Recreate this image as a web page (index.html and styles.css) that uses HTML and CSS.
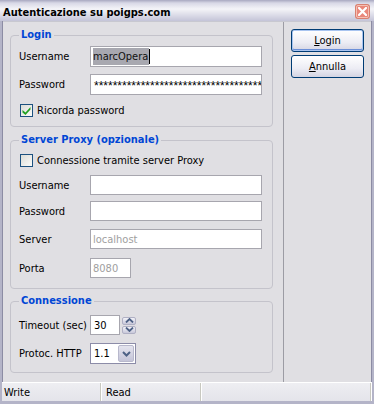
FILE: index.html
```html
<!DOCTYPE html>
<html>
<head>
<meta charset="utf-8">
<link rel="stylesheet" href="styles.css">
</head>
<body>
<div class="window">
  <div class="titlebar">
    <span class="title">Autenticazione su poigps.com</span>
    <span class="close"><svg width="9" height="9" viewBox="0 0 9 9"><path d="M1 1 L8 8 M8 1 L1 8" stroke="#fff" stroke-width="2.2" stroke-linecap="square"/></svg></span>
  </div>
  <div class="client">
    <div class="main">
      <fieldset class="group g-login">
        <legend>Login</legend>
        <div class="row">
          <span class="label">Username</span>
          <div class="input wide"><span class="sel">marcOpera</span><span class="caret"></span></div>
        </div>
        <div class="row">
          <span class="label">Password</span>
          <div class="input wide pw">************************************</div>
        </div>
        <div class="row check-row">
          <span class="checkbox on"><svg width="11" height="11" viewBox="0 0 11 11"><path d="M1.5 5 L4.5 7.5 L9.5 2 L9.5 4.5 L4.5 10 L1.5 7.5 Z" fill="#21a121"/></svg></span>
          <span class="check-label">Ricorda password</span>
        </div>
      </fieldset>

      <fieldset class="group g-proxy">
        <legend>Server Proxy (opzionale)</legend>
        <div class="row check-row">
          <span class="checkbox"></span>
          <span class="check-label">Connessione tramite server Proxy</span>
        </div>
        <div class="row r20">
          <span class="label">Username</span>
          <div class="input wide"></div>
        </div>
        <div class="row r20">
          <span class="label">Password</span>
          <div class="input wide"></div>
        </div>
        <div class="row r20 server">
          <span class="label">Server</span>
          <div class="input wide disabled">localhost</div>
        </div>
        <div class="row r20 porta">
          <span class="label">Porta</span>
          <div class="input short disabled">8080</div>
        </div>
      </fieldset>

      <fieldset class="group g-conn">
        <legend>Connessione</legend>
        <div class="row r20">
          <span class="label">Timeout (sec)</span>
          <div class="input num">30</div>
          <div class="spinner">
            <span class="spin-btn"><svg width="9" height="5" viewBox="0 0 9 5"><path d="M1 4.5 L4.5 1 L8 4.5" fill="none" stroke="#4d6185" stroke-width="1.8"/></svg></span>
            <span class="spin-btn"><svg width="9" height="5" viewBox="0 0 9 5"><path d="M1 0.5 L4.5 4 L8 0.5" fill="none" stroke="#4d6185" stroke-width="1.8"/></svg></span>
          </div>
        </div>
        <div class="row r21">
          <span class="label">Protoc. HTTP</span>
          <div class="combo">
            <span class="combo-val">1.1</span>
            <span class="combo-btn"><svg width="9" height="6" viewBox="0 0 9 6"><path d="M1 1 L4.5 4.5 L8 1" fill="none" stroke="#4d6185" stroke-width="2"/></svg></span>
          </div>
        </div>
      </fieldset>
    </div>
    <div class="side">
      <button class="btn default"><u>L</u>ogin</button>
      <button class="btn"><u>A</u>nnulla</button>
    </div>
  </div>
  <div class="status">
    <span class="panel p1">Write</span>
    <span class="panel p2">Read</span>
    <span class="panel p3"></span>
  </div>
</div>
</body>
</html>
```

FILE: styles.css
```css
html, body {
  margin: 0;
  padding: 0;
  background: #ffffff;
}

body {
  font-family: "DejaVu Sans Condensed", "Liberation Sans", sans-serif;
  font-size: 11px;
  color: #000;
}

.window {
  width: 374px;
  height: 404px;
  box-sizing: border-box;
  display: flex;
  flex-direction: column;
  background: #e0dfe3;
  border-left: 2px solid #b4b4c8;
  border-right: 2px solid #b4b4c8;
  border-bottom: 3px solid #b4b4c8;
  box-shadow: inset 1px 0 0 #8c8ca4, inset -1px 0 0 #8c8ca4, inset 0 -1px 0 #8c8ca4;
}

.titlebar {
  height: 21px;
  flex: none;
  margin: 0 -2px;
  display: flex;
  align-items: center;
  justify-content: space-between;
  padding: 3px 5px 0 3px;
  box-sizing: border-box;
  background: linear-gradient(#a8a8c0 0, #d8d8e6 3px, #f4f4f8 9px, #dcdce8 15px, #c4c4d8 21px);
}

.title {
  font-family: "DejaVu Sans Condensed", "Liberation Sans", sans-serif;
  font-weight: bold;
  font-size: 11px;
  color: #000;
}

.close {
  width: 13px;
  height: 13px;
  box-sizing: border-box;
  border: 1px solid #f4c0b4;
  border-radius: 2px;
  background: #e9877a;
  display: flex;
  align-items: center;
  justify-content: center;
  box-shadow: 0 0 0 1px #d88070;
  margin-top: -1px;
}

.client {
  flex: 1;
  display: flex;
  border-top: 1px solid #c8c8d0;
  margin-left: 1px;
  margin-right: 1px;
}

.main {
  width: 280px;
  flex: none;
  border-right: 1px solid #9c9ca4;
  display: flex;
  flex-direction: column;
  padding-top: 6px;
}

.group {
  margin: 0 10px 0 7px;
  border: 1px solid #c4c3cb;
  border-radius: 4px;
  padding: 4px 9px 7px 8px;
  display: flex;
  flex-direction: column;
  gap: 6px;
}

.group legend {
  font-family: "DejaVu Sans Condensed", "Liberation Sans", sans-serif;
  font-weight: bold;
  font-size: 11px;
  line-height: 14px;
  color: #0046d5;
  padding: 0 2px;
  margin-left: 0;
}

.g-login .row:nth-child(3) { margin-top: 1px; }

.g-proxy {
  margin-top: 6px;
  padding-top: 5px;
  padding-bottom: 10px;
  gap: 6px;
}

.g-proxy .server { margin-top: 2px; }
.g-proxy .porta { margin-top: 3px; }

.g-conn {
  margin-top: 5px;
  padding-top: 7px;
  padding-bottom: 8px;
  gap: 8px;
}

.row {
  display: flex;
  align-items: center;
  height: 21px;
}

.r20 { height: 20px; }
.r21 { height: 21px; }

.check-row {
  height: 17px;
  margin-top: 1px;
}

.g-proxy .check-row { margin-top: 0; }

.label {
  width: 71px;
  flex: none;
}

.input {
  height: 100%;
  box-sizing: border-box;
  border: 1px solid #a7a6ae;
  background: #fff;
  display: flex;
  align-items: center;
  padding: 0 2px;
  overflow: hidden;
  white-space: nowrap;
}

.wide { width: 172px; }
.short { width: 41px; }
.num { width: 30px; padding-left: 3px; }

.disabled { color: #a0a0a0; }

.pw {
  font-family: "Liberation Sans", sans-serif;
  font-size: 12px;
  padding-top: 3px;
  padding-left: 3px;
}

.sel {
  background: #a8a8b0;
  color: #111;
  line-height: 17px;
  padding: 0 1px 0 0;
}

.caret {
  width: 1px;
  height: 15px;
  background: #000;
}

.checkbox {
  width: 13px;
  height: 13px;
  box-sizing: border-box;
  border: 1px solid #1c5180;
  background: linear-gradient(135deg, #dcdcd7, #fbfbf9);
  display: flex;
  align-items: center;
  justify-content: center;
  margin-left: 1px;
  flex: none;
}

.check-label {
  margin-left: 4px;
}

.spinner {
  margin-left: 2px;
  display: flex;
  flex-direction: column;
  gap: 1px;
}

.spin-btn {
  width: 14px;
  height: 8px;
  box-sizing: border-box;
  border: 1px solid #b0b0c4;
  border-radius: 2px;
  background: linear-gradient(#f2f2f8, #c8c8da);
  display: flex;
  align-items: center;
  justify-content: center;
}

.combo {
  width: 46px;
  height: 21px;
  box-sizing: border-box;
  border: 1px solid #8c8ca8;
  background: #fff;
  display: flex;
  align-items: center;
  padding: 1px;
}

.combo-val {
  flex: 1;
  padding-left: 2px;
}

.combo-btn {
  width: 16px;
  height: 17px;
  box-sizing: border-box;
  border: 1px solid #b8b8cc;
  border-radius: 2px;
  background: linear-gradient(#e4e4ee, #c4c4d8);
  display: flex;
  align-items: center;
  justify-content: center;
}

.side {
  flex: 1;
  display: flex;
  flex-direction: column;
  gap: 3px;
  padding: 7px 0 0 7px;
}

.btn {
  width: 73px;
  height: 23px;
  box-sizing: border-box;
  border: 1px solid #003c74;
  border-radius: 3px;
  background: linear-gradient(#ffffff, #ececf4 60%, #d4d4e2);
  font-family: "DejaVu Sans Condensed", "Liberation Sans", sans-serif;
  font-size: 11px;
  color: #000;
  padding: 0;
}

.btn.default {
  box-shadow: inset 0 0 0 1px #a8c4f0, inset 0 -1px 0 1px #6c8fd8;
}

.status {
  height: 19px;
  flex: none;
  display: flex;
  border-top: 1px solid #fff;
  box-sizing: border-box;
  background: linear-gradient(#eeeef2, #e4e4ea);
}

.panel {
  display: flex;
  align-items: center;
  padding-left: 2px;
  box-sizing: border-box;
  border-right: 1px solid #fff;
  box-shadow: inset -1px 0 0 #c8c8c0;
}

.p1 { width: 100px; }
.p2 { width: 100px; padding-left: 4px; }
.p3 { flex: 1; }
```
